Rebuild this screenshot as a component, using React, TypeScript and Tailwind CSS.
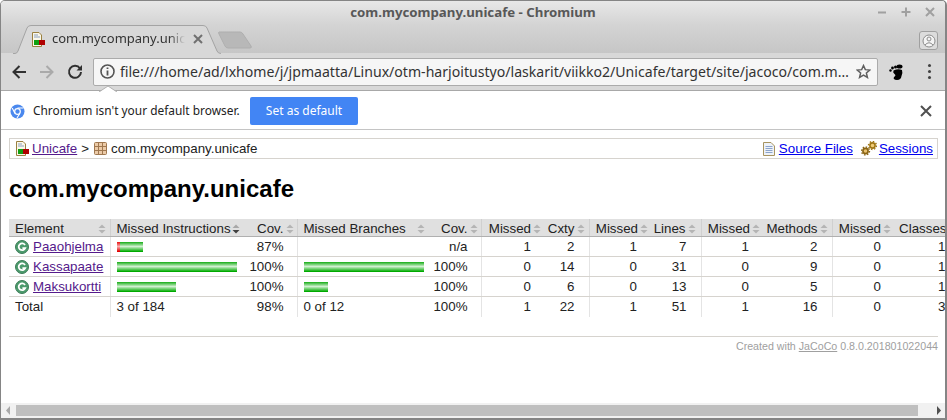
import React from 'react'

type Row = {
  name: string
  bar: number[]
  cov: string
  branchBar?: number
  branchCov: string
  nums: string[]
}

const rows: Row[] = [
  { name: 'Paaohjelma', bar: [3, 23], cov: '87%', branchCov: 'n/a', nums: ['1', '2', '1', '7', '1', '2', '0', '1'] },
  { name: 'Kassapaate', bar: [0, 120], cov: '100%', branchBar: 120, branchCov: '100%', nums: ['0', '14', '0', '31', '0', '9', '0', '1'] },
  { name: 'Maksukortti', bar: [0, 59], cov: '100%', branchBar: 24, branchCov: '100%', nums: ['0', '6', '0', '13', '0', '5', '0', '1'] },
]

const totals = ['1', '22', '1', '51', '1', '16', '0', '3']
const numHeads = [
  { label: 'Missed', pr: 'pr-[4px]' },
  { label: 'Cxty', pr: 'pr-[4px]' },
  { label: 'Missed', pr: 'pr-[3px]' },
  { label: 'Lines', pr: 'pr-[5px]' },
  { label: 'Missed', pr: 'pr-[3px]' },
  { label: 'Methods', pr: 'pr-[4px]' },
  { label: 'Missed', pr: 'pr-[4px]' },
  { label: 'Classes', pr: 'pr-[3px]' },
]
const widths = [101, 132, 55, 132, 52, 64, 44, 62, 50, 62, 69, 63, 65]

const SortIcon = ({ active }: { active?: boolean }) => (
  <svg width="8" height="10" viewBox="0 0 8 10" className="shrink-0">
    <path d="M4 0.5 L7.5 4 L0.5 4 Z" fill={active ? '#a8a8a8' : '#b4b4b4'} />
    <path d="M4 9.5 L7.5 6 L0.5 6 Z" fill={active ? '#404040' : '#b4b4b4'} />
  </svg>
)

const GreenBar = ({ width }: { width: number }) => (
  <div
    className="h-[10px] bg-[linear-gradient(#14ac14,#d0f0d0_45%,#00aa00_95%)]"
    style={{ width }}
  />
)

const RedBar = ({ width }: { width: number }) => (
  <div
    className="h-[10px] bg-[linear-gradient(#e81010,#f8b0b0_45%,#e00000_95%)]"
    style={{ width }}
  />
)

const ReportIcon = () => (
  <svg width="14" height="15" viewBox="0 0 14 15" className="shrink-0">
    <path d="M1.5 0.5 H8 L10.5 3 V14.5 H1.5 Z" fill="#fbf8e8" stroke="#9a8040" />
    <path d="M3 3 H7 M3 5 H9" stroke="#8ca0c0" />
    <rect x="3" y="8" width="6" height="5" fill="#10a010" />
    <rect x="8" y="8" width="6" height="5" fill="#b00000" />
  </svg>
)

const PackageIcon = () => (
  <svg width="13" height="13" viewBox="0 0 13 13" className="shrink-0">
    <rect x="0.5" y="0.5" width="12" height="12" rx="1" fill="#eccba8" stroke="#a07850" />
    <path d="M4.5 0.5 V12.5 M8.5 0.5 V12.5 M0.5 4.5 H12.5 M0.5 8.5 H12.5" stroke="#a07850" />
  </svg>
)

const SourceIcon = () => (
  <svg width="12" height="14" viewBox="0 0 12 14" className="shrink-0">
    <path d="M0.5 0.5 H8 L11.5 4 V13.5 H0.5 Z" fill="#eef2f8" stroke="#a89460" />
    <path d="M2.5 4.5 H9.5 M2.5 6.5 H9.5 M2.5 8.5 H9.5 M2.5 10.5 H9.5" stroke="#8ca4cc" />
  </svg>
)

const SessionIcon = () => (
  <svg width="16" height="15" viewBox="0 0 16 15" className="shrink-0">
    <circle cx="4.5" cy="10" r="2.6" fill="#e8c070" stroke="#8a6414" strokeWidth="1.6" />
    <circle cx="4.5" cy="10" r="4" fill="none" stroke="#8a6414" strokeWidth="1.4" strokeDasharray="1.5 1.6" />
    <circle cx="11.5" cy="4.5" r="2.6" fill="#f0cc78" stroke="#a07818" strokeWidth="1.6" />
    <circle cx="11.5" cy="4.5" r="4" fill="none" stroke="#a07818" strokeWidth="1.4" strokeDasharray="1.5 1.6" />
  </svg>
)

const ClassIcon = () => (
  <svg width="14" height="14" viewBox="0 0 14 14" className="shrink-0">
    <circle cx="7" cy="7" r="6.5" fill="#4c9a6c" stroke="#3c7c58" strokeWidth="1" />
    <path d="M10 5 A3.4 3.4 0 1 0 10.2 8.2 H7.4" fill="none" stroke="#ffffff" strokeWidth="1.8" />
  </svg>
)

const Bubble = () => (
  <svg width="18" height="6" viewBox="0 0 18 6" className="absolute left-[5px] top-[27px]">
    <path d="M0 6 L9 0 L18 6 Z" fill="#ffffff" />
    <path d="M0 6 L9 0 L18 6" fill="none" stroke="#b0b0b0" />
  </svg>
)

const headCell = 'h-[17px] bg-[#e0e0e0] border-b border-b-[#b0b0b0] border-[#d0d0d0] font-normal p-0 pt-[3px] align-top leading-[14px]'
const bodyCell = 'h-[20px] p-0 border-b border-b-[#d6d3ce]'
const sep = 'border-r border-r-[#e4e4e4]'

const App = () => {
  return (
    <div className="flex h-[420px] w-[947px] flex-col overflow-hidden rounded-t-[5px] border-x border-t border-b-2 border-[#858585] bg-white font-['Noto_Sans',sans-serif] border-r-2">
      {/* title bar + tab strip */}
      <div className="flex h-[52px] flex-col bg-[linear-gradient(#e8e8e8,#d4d4d4_45%,#c6c6c6)]">
        <div className="relative flex h-[24px] items-center justify-center">
          <span className="text-[13.25px] font-bold text-[#585858]">com.mycompany.unicafe - Chromium</span>
          <div className="absolute right-[10px] top-[6px] flex items-center gap-[14px] text-[#a0a0a0]">
            <svg width="10" height="10" viewBox="0 0 10 10"><path d="M1 5.5 H9" stroke="currentColor" strokeWidth="2" /></svg>
            <svg width="10" height="10" viewBox="0 0 10 10"><path d="M0.5 5 H9.5 M5 0.5 V9.5" stroke="currentColor" strokeWidth="2" /></svg>
            <svg width="10" height="10" viewBox="0 0 10 10"><path d="M1 1 L9 9 M9 1 L1 9" stroke="currentColor" strokeWidth="2" /></svg>
          </div>
        </div>
        <div className="flex flex-1 items-end">
          <div className="relative ml-[12px] flex h-[28px] w-[208px] items-center pl-[18px] pr-[20px]">
            <svg width="208" height="29" viewBox="0 0 208 29" className="absolute left-0 top-0">
              <path d="M0 28.5 H2 Q4 28.5 5 26 L14 3 Q15 0.5 18 0.5 H190 Q193 0.5 194 3 L204 26 Q205 28.5 208 28.5" fill="#d8d8d8" stroke="#a4a4a4" />
            </svg>
            <div className="relative flex items-center">
              <ReportIcon />
              <span className="ml-[7px] w-[133px] overflow-hidden whitespace-nowrap text-[13px] text-[#333333] [mask-image:linear-gradient(90deg,#000_88%,transparent)]">
                com.mycompany.unicafe
              </span>
              <svg width="10" height="10" viewBox="0 0 10 10" className="ml-[8px]"><path d="M1 1 L9 9 M9 1 L1 9" stroke="#707070" strokeWidth="2" /></svg>
            </div>
          </div>
          <svg width="36" height="19" viewBox="0 0 36 19" className="mb-[3px] ml-[-3px]">
            <path d="M1 1 H22 Q24 1 25 3 L33 15 Q34 17 32 17 H10 Q8 17 7 15 L1 3 Q0 1 1 1 Z" fill="#b8b8b8" stroke="#aeaeae" />
          </svg>
          <div className="ml-auto mb-[3px] mr-[7px] flex h-[19px] w-[19px] items-center justify-center rounded-[3px] border border-[#a0a0a0] bg-[#dcdcdc]">
            <svg width="14" height="14" viewBox="0 0 14 14">
              <circle cx="7" cy="7" r="6" fill="#f4f4f4" stroke="#8c8c8c" />
              <circle cx="7" cy="5" r="2" fill="none" stroke="#8c8c8c" />
              <path d="M3 11 Q7 6.5 11 11" fill="none" stroke="#8c8c8c" />
            </svg>
          </div>
        </div>
      </div>

      {/* toolbar */}
      <div className="flex h-[38px] items-center border-b border-[#a8a8a8] bg-[#d8d8d8]">
        <svg width="16" height="16" viewBox="0 0 16 16" className="ml-[10px]">
          <path d="M15 8 H2.5 M8.5 2 L2.5 8 L8.5 14" fill="none" stroke="#303030" strokeWidth="2" />
        </svg>
        <svg width="16" height="16" viewBox="0 0 16 16" className="ml-[12px]">
          <path d="M1 8 H13.5 M7.5 2 L13.5 8 L7.5 14" fill="none" stroke="#aaaaaa" strokeWidth="2" />
        </svg>
        <svg width="16" height="16" viewBox="0 0 16 16" className="ml-[12px]">
          <path d="M13 4.5 A6 6 0 1 0 14 8" fill="none" stroke="#303030" strokeWidth="2" />
          <path d="M9.5 6.5 H15 V1 Z" fill="#303030" />
        </svg>
        <div className="relative ml-[10px] flex h-[28px] w-[785px] items-center rounded-[2px] border border-[#ababab] bg-[#f6f6f6]">
          <svg width="15" height="15" viewBox="0 0 15 15" className="ml-[6px] shrink-0">
            <circle cx="7.5" cy="7.5" r="6.5" fill="none" stroke="#555555" strokeWidth="1.6" />
            <path d="M7.5 6.5 V11.5 M7.5 3.5 V5" stroke="#555555" strokeWidth="1.8" />
          </svg>
          <span className="ml-[5px] w-[728px] shrink-0 whitespace-nowrap text-[14.1px] text-[#333333]">
            file:///home/ad/lxhome/j/jpmaatta/Linux/otm-harjoitustyo/laskarit/viikko2/Unicafe/target/site/jacoco/com.m…
          </span>
          <svg width="15" height="15" viewBox="0 0 24 24" className="ml-[8px] shrink-0">
            <path d="M12 2.5 L14.9 9 L22 9.7 L16.6 14.4 L18.3 21.4 L12 17.7 L5.7 21.4 L7.4 14.4 L2 9.7 L9.1 9 Z" fill="none" stroke="#606060" strokeWidth="2.4" />
          </svg>
          <Bubble />
        </div>
        <svg width="14" height="16" viewBox="0 0 14 16" className="ml-[11px]">
          <circle cx="1.5" cy="6.5" r="1.2" fill="#000000" />
          <circle cx="3.5" cy="4" r="1.4" fill="#000000" />
          <circle cx="6.5" cy="3" r="1.5" fill="#000000" />
          <ellipse cx="10.5" cy="2.6" rx="3" ry="2" fill="#000000" />
          <path d="M4.5 6.5 Q9 4.5 13 6 Q14 9 12.5 12 Q12 16 8 16 Q3.5 15.5 5 13 Q7.5 11.5 5.5 10 Q3.5 8.5 4.5 6.5 Z" fill="#000000" />
        </svg>
        <div className="ml-[25px] flex flex-col gap-[3px]">
          <div className="h-[3px] w-[3px] rounded-full bg-[#404040]" />
          <div className="h-[3px] w-[3px] rounded-full bg-[#404040]" />
          <div className="h-[3px] w-[3px] rounded-full bg-[#404040]" />
        </div>
      </div>

      {/* default browser infobar */}
      <div className="flex h-[39px] items-center border-b border-[#c4c4c4] bg-white pl-[9px] pt-[2px]">
        <svg width="15" height="15" viewBox="0 0 15 15" className="shrink-0">
          <circle cx="7.5" cy="7.5" r="7" fill="#4a88ee" />
          <circle cx="7.5" cy="7.5" r="2.8" fill="#4a88ee" stroke="#ffffff" strokeWidth="1.2" />
          <path d="M7.5 4 H13.5 M5 9.5 L2.2 4 M9.8 9.5 L7 14" stroke="#ffffff" strokeWidth="1.1" />
        </svg>
        <span className="ml-[8px] w-[217px] whitespace-nowrap text-[11.9px] text-[#222222]">Chromium isn't your default browser.</span>
        <div className="flex h-[28px] w-[108px] items-center justify-center rounded-[2px] bg-[#4285f4] text-[12px] text-white">
          Set as default
        </div>
        <svg width="12" height="12" viewBox="0 0 12 12" className="ml-auto mr-[13px]">
          <path d="M1 1 L11 11 M11 1 L1 11" stroke="#505050" strokeWidth="2" />
        </svg>
      </div>

      {/* page */}
      <div className="min-h-0 flex-1 overflow-hidden bg-white pl-[8px] pt-[8px] font-['Liberation_Sans',sans-serif] text-[13.33px] leading-[15px] text-[#222222]">
        <div className="flex h-[21px] w-[929px] items-center border border-[#d6d3ce] pl-[5px] pr-[4px]">
          <ReportIcon />
          <a className="ml-[3px] text-[#551a8b] underline">Unicafe</a>
          <span className="ml-[4px] mr-[5px]">&gt;</span>
          <PackageIcon />
          <span className="ml-[4px] text-[#222222]">com.mycompany.unicafe</span>
          <div className="ml-auto flex items-center">
            <SourceIcon />
            <a className="ml-[4px] text-[#0000ee] underline">Source Files</a>
            <div className="ml-[8px]"><SessionIcon /></div>
            <a className="ml-[2px] text-[#0000ee] underline">Sessions</a>
          </div>
        </div>

        <h1 className="mt-[16px] text-[24px] font-bold leading-[28px] text-black">com.mycompany.unicafe</h1>

        <table className="mt-[16px] w-[951px] table-fixed border-collapse">
          <colgroup>
            {widths.map((w, i) => (
              <col key={i} style={{ width: w }} />
            ))}
          </colgroup>
          <thead>
            <tr>
              <th className={`${headCell} border-r`}>
                <div className="flex items-center justify-between pl-[6px] pr-[4px]">
                  <span>Element</span>
                  <SortIcon />
                </div>
              </th>
              <th className={headCell}>
                <div className="flex items-center justify-between pl-[6px] pr-[2px]">
                  <span>Missed Instructions</span>
                  <SortIcon active />
                </div>
              </th>
              <th className={`${headCell} border-r`}>
                <div className="flex items-center justify-end gap-[2px] pr-[3px]">
                  <span>Cov.</span>
                  <SortIcon />
                </div>
              </th>
              <th className={headCell}>
                <div className="flex items-center justify-between pl-[6px] pr-[4px]">
                  <span>Missed Branches</span>
                  <SortIcon />
                </div>
              </th>
              <th className={`${headCell} border-r`}>
                <div className="flex items-center justify-end gap-[2px] pr-[3px]">
                  <span>Cov.</span>
                  <SortIcon />
                </div>
              </th>
              {numHeads.map((h, i) => (
                <th key={i} className={`${headCell} ${i % 2 === 1 ? 'border-r' : ''}`}>
                  <div className={`flex items-center justify-end gap-[2px] whitespace-nowrap ${h.pr}`}>
                    <span>{h.label}</span>
                    <SortIcon />
                  </div>
                </th>
              ))}
            </tr>
          </thead>
          <tbody>
            {rows.map((row) => (
              <tr key={row.name}>
                <td className={`${bodyCell} ${sep} pl-[6px]`}>
                  <div className="flex items-center gap-[4px]">
                    <ClassIcon />
                    <a className="text-[#551a8b] underline">{row.name}</a>
                  </div>
                </td>
                <td className={`${bodyCell} pl-[6px]`}>
                  <div className="flex">
                    {row.bar[0] > 0 && <RedBar width={row.bar[0]} />}
                    <GreenBar width={row.bar[1]} />
                  </div>
                </td>
                <td className={`${bodyCell} ${sep} pr-[13px] text-right`}>{row.cov}</td>
                <td className={`${bodyCell} pl-[6px]`}>
                  {row.branchBar && <GreenBar width={row.branchBar} />}
                </td>
                <td className={`${bodyCell} ${sep} pr-[13px] text-right`}>{row.branchCov}</td>
                {row.nums.map((n, i) => (
                  <td key={i} className={`${bodyCell} pr-[14px] text-right ${i % 2 === 1 ? sep : ''}`}>{n}</td>
                ))}
              </tr>
            ))}
          </tbody>
          <tfoot>
            <tr>
              <td className={`h-[20px] p-0 pl-[6px] ${sep}`}>Total</td>
              <td className="h-[20px] p-0 pl-[6px]">3 of 184</td>
              <td className={`h-[20px] p-0 pr-[13px] text-right ${sep}`}>98%</td>
              <td className="h-[20px] p-0 pl-[6px]">0 of 12</td>
              <td className={`h-[20px] p-0 pr-[13px] text-right ${sep}`}>100%</td>
              {totals.map((n, i) => (
                <td key={i} className={`h-[20px] p-0 pr-[14px] text-right ${i % 2 === 1 ? sep : ''}`}>{n}</td>
              ))}
            </tr>
          </tfoot>
        </table>

        <div className="mt-[19px] w-[929px] border-t border-[#d6d3ce] pt-[2px] text-right text-[10.67px] text-[#a0a0a0]">
          Created with <a className="underline">JaCoCo</a> 0.8.0.201801022044
        </div>
      </div>

      {/* horizontal scrollbar */}
      <div className="flex h-[15px] items-center bg-[#f1f1f1]">
        <svg width="5" height="9" viewBox="0 0 5 9" className="ml-[5px]"><path d="M4 0 V9 L0 4.5 Z" fill="#a8a8a8" /></svg>
        <div className="ml-[5px] h-[11px] w-[902px] bg-[#bfbfbf]" />
        <svg width="5" height="9" viewBox="0 0 5 9" className="ml-[19px]"><path d="M0 0 V9 L4 4.5 Z" fill="#505050" /></svg>
      </div>
    </div>
  )
}

export default App
